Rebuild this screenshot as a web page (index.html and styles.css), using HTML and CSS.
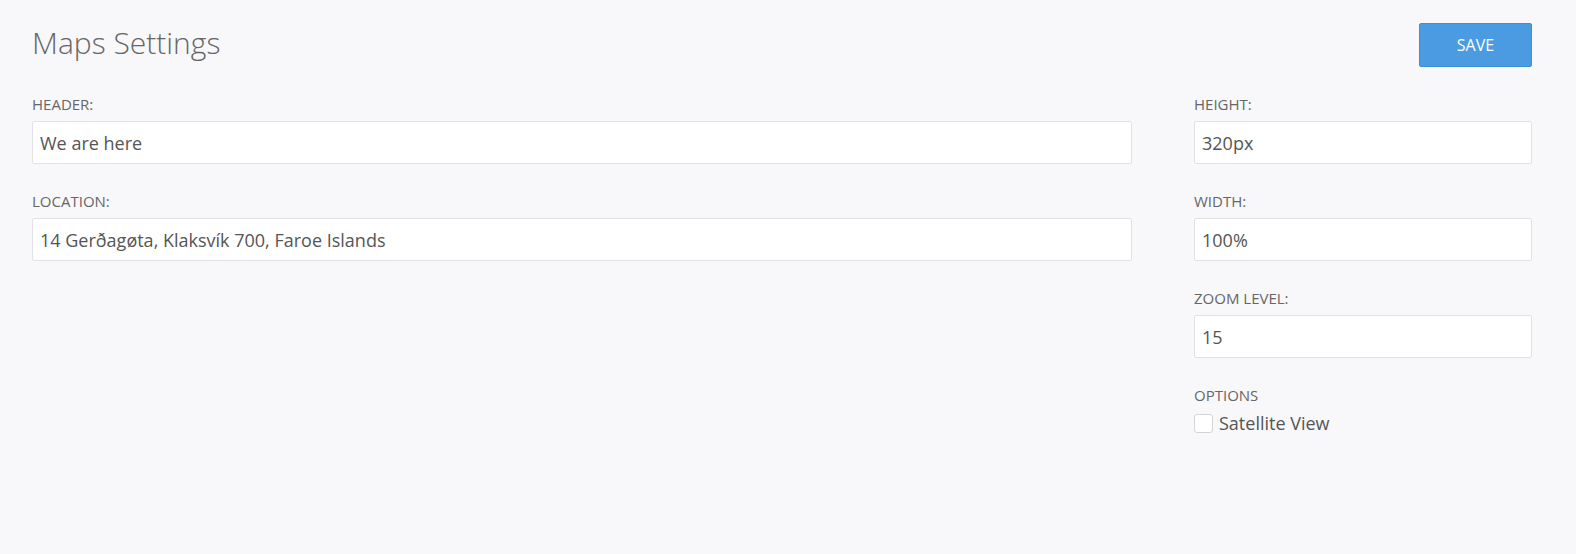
FILE: index.html
```html
<!DOCTYPE html>
<html lang="en">
<head>
<meta charset="utf-8">
<title>Maps Settings</title>
<link rel="stylesheet" href="styles.css">
</head>
<body>
<div class="page">
  <div class="topbar">
    <h1 class="title">Maps Settings</h1>
    <button class="save" type="button">SAVE</button>
  </div>
  <div class="columns">
    <div class="main">
      <div class="field">
        <label class="label">HEADER:</label>
        <input class="input" type="text" value="We are here">
      </div>
      <div class="field">
        <label class="label">LOCATION:</label>
        <input class="input" type="text" value="14 Gerðagøta, Klaksvík 700, Faroe Islands">
      </div>
    </div>
    <div class="side">
      <div class="field">
        <label class="label">HEIGHT:</label>
        <input class="input" type="text" value="320px">
      </div>
      <div class="field">
        <label class="label">WIDTH:</label>
        <input class="input" type="text" value="100%">
      </div>
      <div class="field">
        <label class="label">ZOOM LEVEL:</label>
        <input class="input" type="text" value="15">
      </div>
      <div class="field">
        <div class="label options-label">OPTIONS</div>
        <label class="check-row">
          <span class="checkbox"></span>
          <span class="check-text">Satellite View</span>
        </label>
      </div>
    </div>
  </div>
</div>
</body>
</html>
```

FILE: styles.css
```css
* { box-sizing: border-box; }
html, body { height: 100%; }
body {
  margin: 0;
  background: #f8f8fa;
  font-family: "Open Sans", "Liberation Sans", sans-serif;
  color: #666;
}
.page {
  padding: 23px 44px 0 32px;
}
.topbar {
  display: flex;
  justify-content: space-between;
  align-items: flex-start;
  height: 44px;
}
.title {
  margin: 0;
  font-weight: 300;
  font-size: 30px;
  line-height: 40px;
  color: #666;
}
.save {
  width: 113px;
  height: 44px;
  border: 1px solid #3f8fd6;
  border-radius: 2px;
  background: #4a9be1;
  color: #fff;
  font-family: "Open Sans", "Liberation Sans", sans-serif;
  font-size: 16px;
  cursor: pointer;
}
.columns {
  display: flex;
  gap: 62px;
  padding-top: 28px;
}
.main { width: 1100px; }
.side { width: 338px; }
.field {
  display: flex;
  flex-direction: column;
  margin-bottom: 28px;
}
.label {
  font-size: 15px;
  line-height: 18px;
  color: #666;
  margin-bottom: 8px;
}
.options-label { margin-bottom: 7px; }
.input {
  height: 43px;
  width: 100%;
  border: 1px solid #e2e2e6;
  border-radius: 2px;
  background: #fff;
  padding: 0 7px;
  font-family: "Open Sans", "Liberation Sans", sans-serif;
  font-size: 18px;
  color: #555;
  outline: none;
}
.check-row {
  display: flex;
  align-items: center;
  gap: 6px;
  height: 24px;
}
.checkbox {
  width: 19px;
  height: 19px;
  border: 1px solid #d4d4d8;
  border-radius: 3px;
  background: #fff;
}
.check-text {
  font-size: 18px;
  line-height: 24px;
  color: #555;
}
```
